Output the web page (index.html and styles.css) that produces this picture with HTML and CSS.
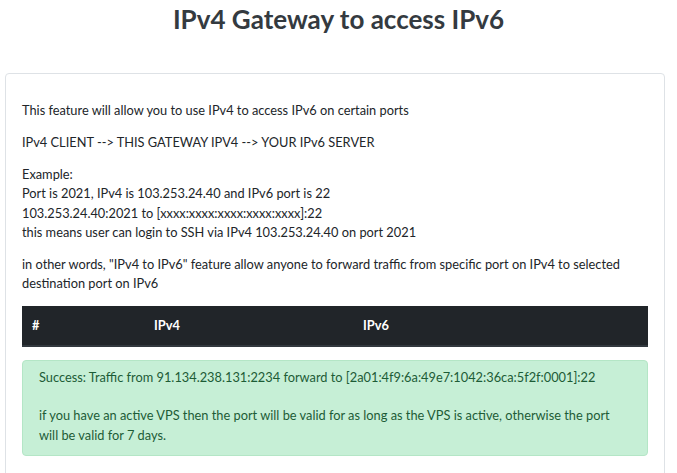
FILE: index.html
```html
<!DOCTYPE html>
<html lang="en">
<head>
<meta charset="utf-8">
<title>IPv4 Gateway to access IPv6</title>
<link rel="stylesheet" href="styles.css">
</head>
<body>
<header class="page-head">
  <h1 class="title">IPv4 Gateway to access IPv6</h1>
</header>
<main class="card">
  <div class="card-body">
    <p>This feature will allow you to use IPv4 to access IPv6 on certain ports</p>
    <p>IPv4 CLIENT --&gt; THIS GATEWAY IPV4 --&gt; YOUR IPv6 SERVER</p>
    <p>Example:<br>Port is 2021, IPv4 is 103.253.24.40 and IPv6 port is 22<br>103.253.24.40:2021 to [xxxx:xxxx:xxxx:xxxx:xxxx]:22<br>this means user can login to SSH via IPv4 103.253.24.40 on port 2021</p>
    <p>in other words, "IPv4 to IPv6" feature allow anyone to forward traffic from specific port on IPv4 to selected destination port on IPv6</p>
    <table class="table">
      <thead>
        <tr>
          <th class="col-num">#</th>
          <th class="col-v4">IPv4</th>
          <th class="col-v6">IPv6</th>
        </tr>
      </thead>
    </table>
    <div class="alert">
      Success: Traffic from 91.134.238.131:2234 forward to [2a01:4f9:6a:49e7:1042:36ca:5f2f:0001]:22<br><br>if you have an active VPS then the port will be valid for as long as the VPS is active, otherwise the port will be valid for 7 days.
    </div>
  </div>
</main>
</body>
</html>
```
FILE: styles.css
```css
* { box-sizing: border-box; }
html, body { margin: 0; padding: 0; background: #fff; }
body {
  font-family: Lato, "Open Sans", "Liberation Sans", sans-serif;
  font-size: 12.8px;
  line-height: 1.5;
  color: #212529;
}
.page-head {
  text-align: center;
  padding-top: 4px;
}
.title {
  margin: 0;
  font-size: 26px;
  font-weight: 700;
  line-height: 1.2;
  color: #343a40;
}
.card {
  margin: 38px 12px 0 5px;
  border: 1px solid #dee2e6;
  border-radius: 4px;
  min-height: 420px;
}
.card-body {
  padding: 27px 16px 16px 16px;
}
.card-body p {
  margin: 0 0 12.8px 0;
}
.table {
  width: 100%;
  border-collapse: collapse;
  margin-bottom: 13px;
}
.table th {
  background: #212529;
  color: #fff;
  font-weight: 700;
  text-align: left;
  padding: 10px 10px;
  border-bottom: 2px solid #32383e;
}
.col-num { width: 122px; }
.col-v4 { width: 209px; }
.alert {
  background: #c6efd6;
  border: 1px solid #b4e6c6;
  border-radius: 4px;
  color: #1d5c36;
  padding: 7px 16px 10px 16px;
}
```
